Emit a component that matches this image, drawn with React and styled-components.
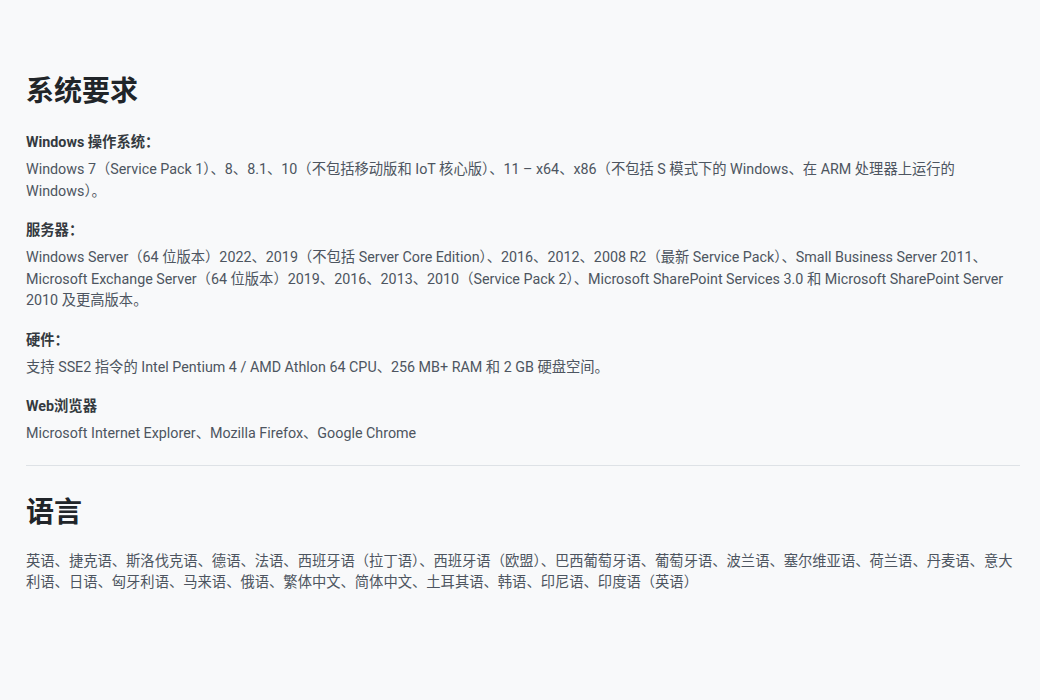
import React from "react";
import styled, { createGlobalStyle } from "styled-components";

const Global = createGlobalStyle`
  body { margin: 0; background: #f8f9fa; font-family: Roboto, "Noto Sans CJK SC", sans-serif; }
`;
const Page = styled.div`padding: 72px 20px 40px 26px;`;
const H2 = styled.h2`
  margin: 0 0 ${p => p.$mb ?? 20}px; font-size: 28px; font-weight: 700; color: #212529; line-height: 40px;
`;
const Label = styled.div`
  font-size: 14.3px; font-weight: 700; color: #343a40; line-height: 21px; margin-bottom: 6px;
`;
const Text = styled.p`
  margin: 0 0 18px; font-size: 14.3px; line-height: 21.5px; color: #4d5560;
`;
const Hr = styled.hr`border: 0; border-top: 1px solid #dee2e6; margin: 20px 0 27px;`;

const items = [
  ["Windows 操作系统：", "Windows 7（Service Pack 1）、8、8.1、10（不包括移动版和 IoT 核心版）、11 – x64、x86（不包括 S 模式下的 Windows、在 ARM 处理器上运行的 Windows）。"],
  ["服务器：", "Windows Server（64 位版本）2022、2019（不包括 Server Core Edition）、2016、2012、2008 R2（最新 Service Pack）、Small Business Server 2011、Microsoft Exchange Server（64 位版本）2019、2016、2013、2010（Service Pack 2）、Microsoft SharePoint Services 3.0 和 Microsoft SharePoint Server 2010 及更高版本。"],
  ["硬件：", "支持 SSE2 指令的 Intel Pentium 4 / AMD Athlon 64 CPU、256 MB+ RAM 和 2 GB 硬盘空间。"],
  ["Web浏览器", "Microsoft Internet Explorer、Mozilla Firefox、Google Chrome"],
];

export default function App() {
  return (
    <Page>
      <Global />
      <H2>系统要求</H2>
      {items.map(([l, t], i) => (
        <div key={l}>
          <Label>{l}</Label>
          <Text style={i === items.length - 1 ? { marginBottom: 0 } : undefined}>{t}</Text>
        </div>
      ))}
      <Hr />
      <H2 $mb={18}>语言</H2>
      <Text>英语、捷克语、斯洛伐克语、德语、法语、西班牙语（拉丁语）、西班牙语（欧盟）、巴西葡萄牙语、葡萄牙语、波兰语、塞尔维亚语、荷兰语、丹麦语、意大利语、日语、匈牙利语、马来语、俄语、繁体中文、简体中文、土耳其语、韩语、印尼语、印度语（英语）</Text>
    </Page>
  );
}
